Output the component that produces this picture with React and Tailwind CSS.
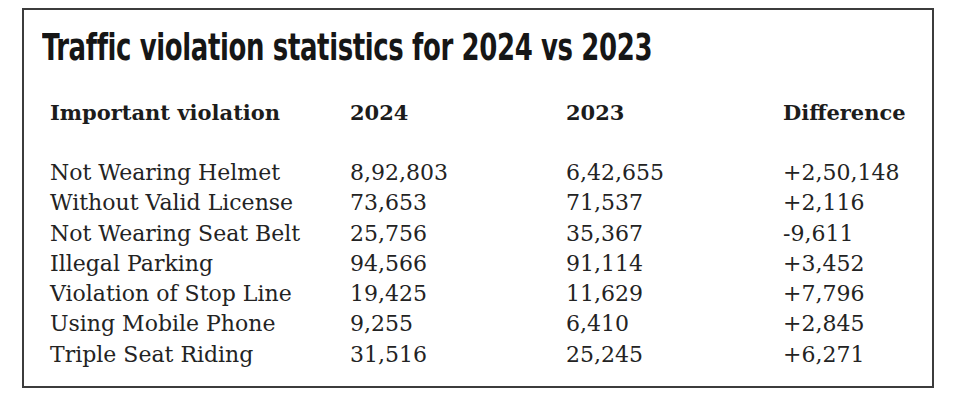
import React from 'react';

const ROWS = [
  ['Not Wearing Helmet', '8,92,803', '6,42,655', '+2,50,148'],
  ['Without Valid License', '73,653', '71,537', '+2,116'],
  ['Not Wearing Seat Belt', '25,756', '35,367', '-9,611'],
  ['Illegal Parking', '94,566', '91,114', '+3,452'],
  ['Violation of Stop Line', '19,425', '11,629', '+7,796'],
  ['Using Mobile Phone', '9,255', '6,410', '+2,845'],
  ['Triple Seat Riding', '31,516', '25,245', '+6,271'],
];

const serif = "font-['DejaVu_Serif','Liberation_Serif',serif]";

export default function App() {
  return (
    <div className="w-[955px] h-[408px] bg-white pt-2 pl-[22px]">
      <div className="w-[912px] h-[380px] border-2 border-[#3c3c3c] pl-[26px] pt-[13px] text-[#1c1c1c]">
        {/* Title */}
        <h1 className="font-['DejaVu_Sans_Condensed','Liberation_Sans',sans-serif] font-bold text-[38px] leading-[48px] tracking-[-0.5px] text-[#161616] ml-[-8px] origin-left scale-x-[0.76] whitespace-nowrap">
          Traffic violation statistics for 2024 vs 2023
        </h1>

        {/* Column headers */}
        <div className={`grid grid-cols-[300px_216px_217px_auto] mt-[27px] ${serif} font-bold text-[21px] leading-[30px]`}>
          <div>Important violation</div>
          <div>2024</div>
          <div>2023</div>
          <div>Difference</div>
        </div>

        {/* Data rows */}
        <div className={`mt-[30px] ${serif} text-[22px] leading-[30.3px] text-[#232323]`}>
          {ROWS.map(([name, a, b, d]) => (
            <div key={name} className="grid grid-cols-[300px_216px_217px_auto]">
              <div>{name}</div>
              <div>{a}</div>
              <div>{b}</div>
              <div>{d}</div>
            </div>
          ))}
        </div>
      </div>
    </div>
  );
}
